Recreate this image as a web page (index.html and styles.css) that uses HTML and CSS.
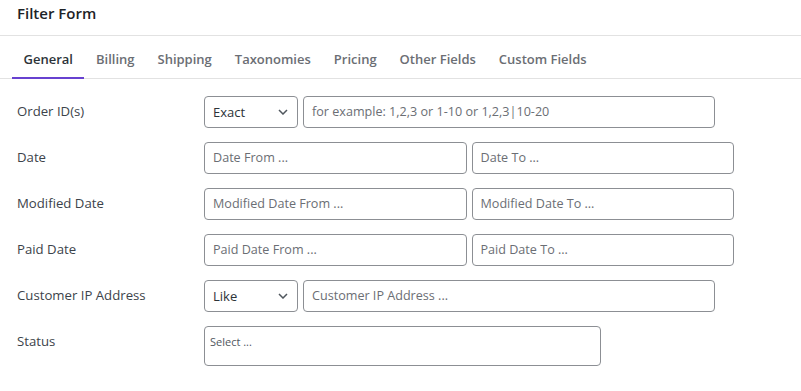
FILE: index.html
```html
<!DOCTYPE html>
<html>
<head>
<meta charset="utf-8">
<link rel="stylesheet" href="styles.css">
</head>
<body>
<div class="panel">
  <div class="header"><h2 class="title">Filter Form</h2></div>
  <div class="tabs">
    <div class="tab active">General</div>
    <div class="tab">Billing</div>
    <div class="tab">Shipping</div>
    <div class="tab">Taxonomies</div>
    <div class="tab">Pricing</div>
    <div class="tab">Other Fields</div>
    <div class="tab">Custom Fields</div>
  </div>
  <div class="form">
    <div class="row">
      <div class="label">Order ID(s)</div>
      <div class="fields">
        <div class="select"><span>Exact</span><svg class="chev" width="10" height="6" viewBox="0 0 10 6"><path d="M1 1l4 4 4-4" fill="none" stroke="#50575e" stroke-width="1.5"/></svg></div>
        <div class="input wide">for example: 1,2,3 or 1-10 or 1,2,3|10-20</div>
      </div>
    </div>
    <div class="row">
      <div class="label">Date</div>
      <div class="fields pair">
        <div class="input">Date From ...</div>
        <div class="input">Date To ...</div>
      </div>
    </div>
    <div class="row">
      <div class="label">Modified Date</div>
      <div class="fields pair">
        <div class="input">Modified Date From ...</div>
        <div class="input">Modified Date To ...</div>
      </div>
    </div>
    <div class="row">
      <div class="label">Paid Date</div>
      <div class="fields pair">
        <div class="input">Paid Date From ...</div>
        <div class="input">Paid Date To ...</div>
      </div>
    </div>
    <div class="row">
      <div class="label">Customer IP Address</div>
      <div class="fields">
        <div class="select"><span>Like</span><svg class="chev" width="10" height="6" viewBox="0 0 10 6"><path d="M1 1l4 4 4-4" fill="none" stroke="#50575e" stroke-width="1.5"/></svg></div>
        <div class="input wide">Customer IP Address ...</div>
      </div>
    </div>
    <div class="row">
      <div class="label">Status</div>
      <div class="fields">
        <div class="multi">Select ...</div>
      </div>
    </div>
  </div>
</div>
</body>
</html>
```
FILE: styles.css
```css
* { box-sizing: border-box; }
body {
  margin: 0;
  background: #fff;
  font-family: "Open Sans", "Noto Sans", sans-serif;
  color: #2c3338;
}
.header {
  height: 36px;
  padding: 0 17px;
  border-bottom: 1px solid #e2e2e2;
}
.title {
  margin: 0;
  font-size: 15px;
  font-weight: 600;
  line-height: 26px;
  color: #1d2327;
}
.tabs {
  display: flex;
  padding-left: 12px;
  border-bottom: 1px solid #e2e2e2;
}
.tab {
  padding: 14px 11.5px 9px;
  line-height: 18px;
  font-size: 13px;
  font-weight: 600;
  color: #6b6e74;
  border-bottom: 2px solid transparent;
  margin-bottom: -1px;
}
.tab.active {
  color: #2c3338;
  border-bottom-color: #6741d0;
}
.form {
  padding: 17px 0 0 17px;
  display: flex;
  flex-direction: column;
  gap: 14px;
}
.row {
  display: flex;
  align-items: flex-start;
}
.label {
  width: 187px;
  flex: none;
  line-height: 31px;
  font-size: 13.2px;
  color: #3c434a;
}
.fields {
  display: flex;
  gap: 5px;
}
.fields.pair { width: 530px; }
.fields.pair .input { flex: 1; }
.select, .input, .multi {
  height: 32px;
  border: 1px solid #8c8f94;
  border-radius: 4px;
  font-size: 12.6px;
  line-height: 30px;
  padding: 0 8px;
  white-space: nowrap;
}
.select {
  width: 94px;
  display: flex;
  justify-content: space-between;
  align-items: center;
  color: #2c3338;
  padding-right: 9px;
  font-size: 13px;
}
.input { color: #6b6e74; }
.input.wide { width: 412px; }
.multi {
  width: 397px;
  height: 40px;
  font-size: 11px;
  line-height: 26px;
  padding: 2px 5px;
  color: #50575e;
}
```
